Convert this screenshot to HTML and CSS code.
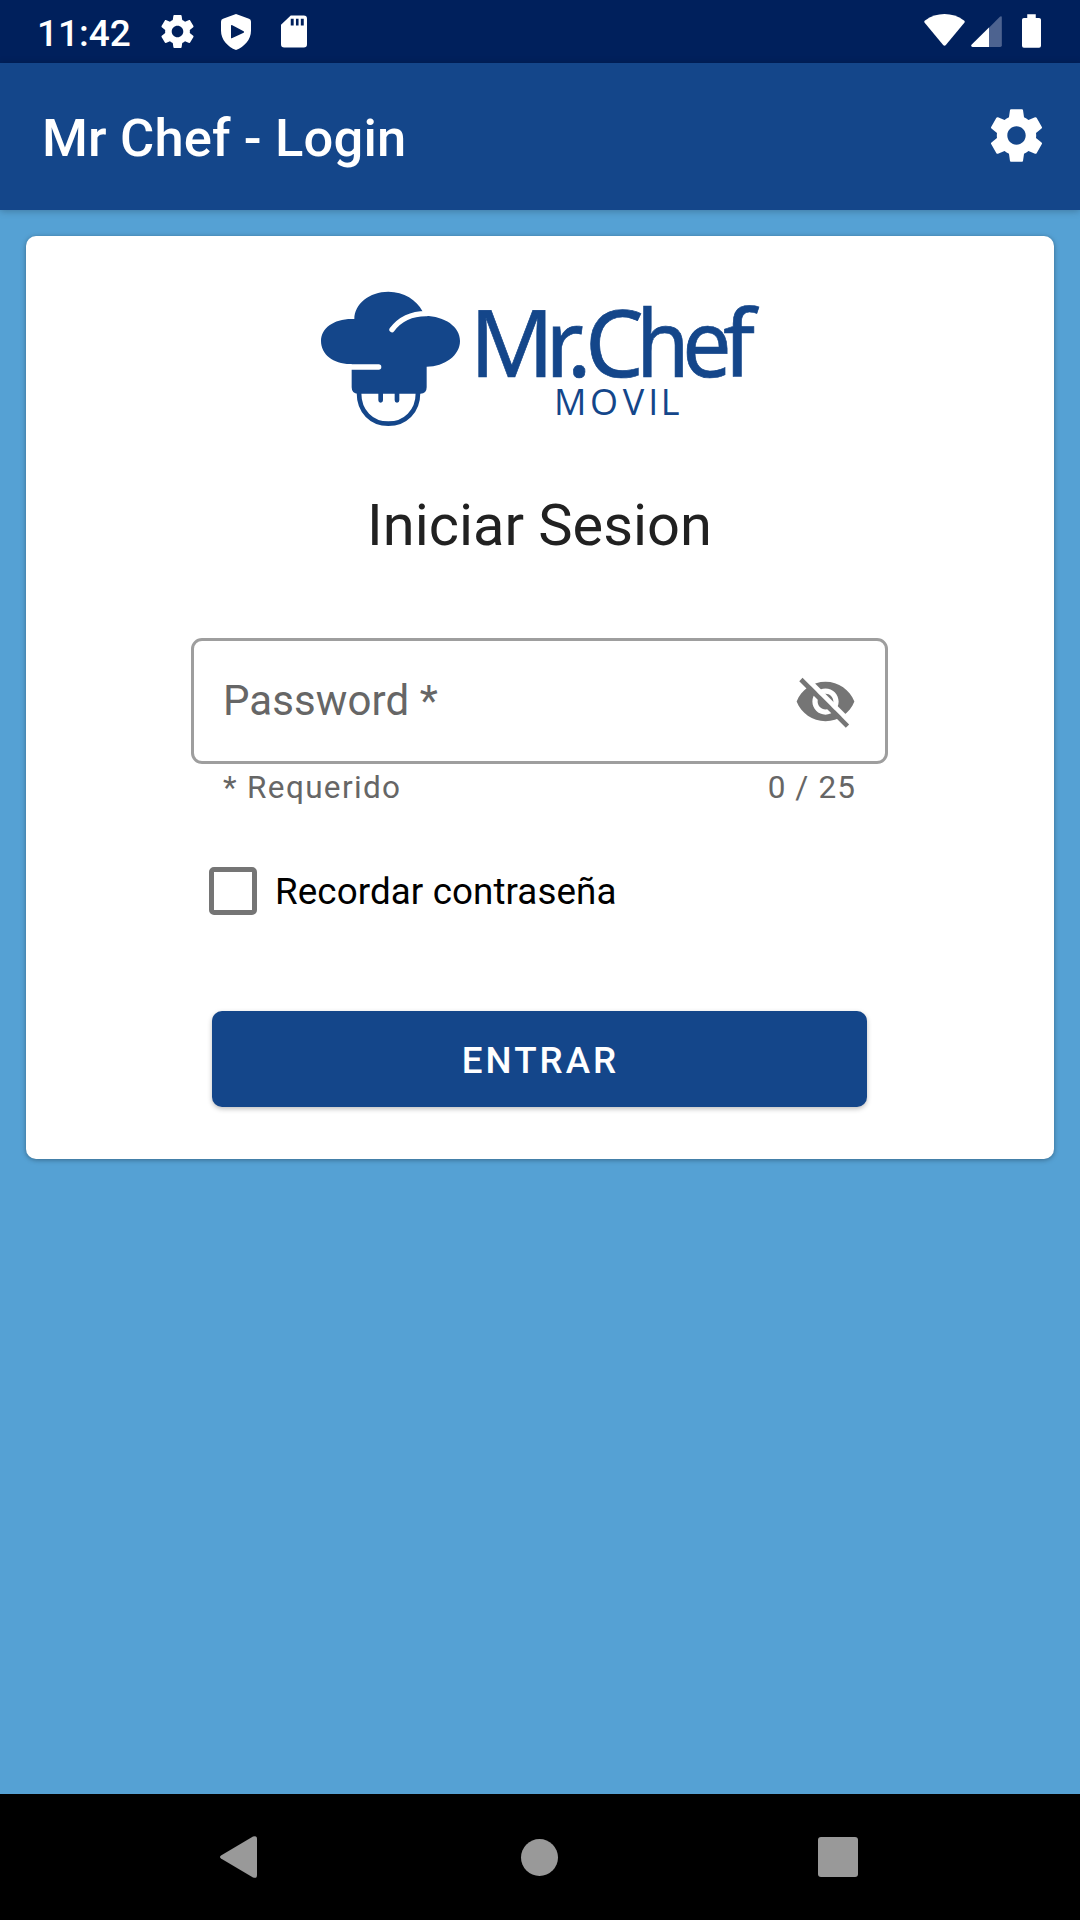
FILE: index.html
```html
<!DOCTYPE html>
<html lang="es">
<head>
    <meta charset="UTF-8">
    <meta name="viewport" content="width=device-width, initial-scale=1.0">
    <title>Mr Chef - Login</title>
    <link rel="stylesheet" href="styles.css">
</head>
<body>
    <div class="status-bar">
        <span class="clock">11:42</span>
        <svg class="status-gear" viewBox="2 2 20 20"><path fill="#fff" d="M19.43 12.98c.04-.32.07-.64.07-.98s-.03-.66-.07-.98l2.11-1.65c.19-.15.24-.42.12-.64l-2-3.46c-.12-.22-.39-.3-.61-.22l-2.49 1c-.52-.4-1.08-.73-1.69-.98l-.38-2.65C14.46 2.18 14.25 2 14 2h-4c-.25 0-.46.18-.49.42l-.38 2.65c-.61.25-1.17.59-1.69.98l-2.49-1c-.23-.09-.49 0-.61.22l-2 3.46c-.13.22-.07.49.12.64l2.11 1.65c-.04.32-.07.65-.07.98s.03.66.07.98l-2.11 1.65c-.19.15-.24.42-.12.64l2 3.46c.12.22.39.3.61.22l2.49-1c.52.4 1.08.73 1.69.98l.38 2.65c.03.24.24.42.49.42h4c.25 0 .46-.18.49-.42l.38-2.65c.61-.25 1.17-.59 1.69-.98l2.49 1c.23.09.49 0 .61-.22l2-3.46c.12-.22.07-.49-.12-.64l-2.11-1.65zM12 15.5c-1.93 0-3.5-1.57-3.5-3.5s1.57-3.5 3.5-3.5 3.5 1.57 3.5 3.5-1.57 3.5-3.5 3.5z"/></svg>
        <svg class="status-shield" viewBox="0 0 90 108"><path fill="#fff" fill-rule="evenodd" d="M45 0 84 14Q90 16 90 23V50C90 77 70 98 45 108C20 98 0 77 0 50V23Q0 16 6 14ZM30 36V71Q30 74 34 72L68 56Q71 54 68 52L34 34Q30 32 30 36Z"/></svg>
        <svg class="status-sd" viewBox="0 0 80 99"><path fill="#fff" fill-rule="evenodd" d="M30 0H70Q80 0 80 10V89Q80 99 70 99H10Q0 99 0 89V29ZM30 10V31H39V10ZM46 10V31H54V10ZM61 10V31H70V10Z"/></svg>
        <div class="status-right">
            <svg class="status-wifi" viewBox="0 0 122 95"><path fill="#fff" d="M3 19C38-6 84-6 119 19Q123 22 120 26L65 92Q61 96 57 92L2 26Q-1 22 3 19Z"/></svg>
            <svg class="status-signal" viewBox="0 0 93 94"><path fill="#4d6390" d="M54 94V36L87 2Q93-2 93 5V89Q93 94 88 94Z"/><path fill="#fff" d="M54 35V94H4Q-2 93 1 87Z"/></svg>
            <svg class="status-battery" viewBox="0 0 58 102"><path fill="#fff" d="M16 0H42V11H52Q58 11 58 17V96Q58 102 52 102H6Q0 102 0 96V17Q0 11 6 11H16Z"/></svg>
        </div>
    </div>

    <header class="app-bar">
        <h1>Mr Chef - Login</h1>
        <svg class="settings-icon" viewBox="0 0 24 24"><path fill="#fff" d="M19.43 12.98c.04-.32.07-.64.07-.98s-.03-.66-.07-.98l2.11-1.65c.19-.15.24-.42.12-.64l-2-3.46c-.12-.22-.39-.3-.61-.22l-2.49 1c-.52-.4-1.08-.73-1.69-.98l-.38-2.65C14.46 2.18 14.25 2 14 2h-4c-.25 0-.46.18-.49.42l-.38 2.65c-.61.25-1.17.59-1.69.98l-2.49-1c-.23-.09-.49 0-.61.22l-2 3.46c-.13.22-.07.49.12.64l2.11 1.65c-.04.32-.07.65-.07.98s.03.66.07.98l-2.11 1.65c-.19.15-.24.42-.12.64l2 3.46c.12.22.39.3.61.22l2.49-1c.52.4 1.08.73 1.69.98l.38 2.65c.03.24.24.42.49.42h4c.25 0 .46-.18.49-.42l.38-2.65c.61-.25 1.17-.59 1.69-.98l2.49 1c.23.09.49 0 .61-.22l2-3.46c.12-.22.07-.49-.12-.64l-2.11-1.65zM12 15.5c-1.93 0-3.5-1.57-3.5-3.5s1.57-3.5 3.5-3.5 3.5 1.57 3.5 3.5-1.57 3.5-3.5 3.5z"/></svg>
    </header>

    <main class="content">
        <form class="card">
            <svg class="logo" viewBox="0 0 1440 510">
                <!-- chef hat -->
                <path fill="#14468a" d="M163 147C163 102 208 65 265 65C312 65 350 90 367 123L375 138C434 138 480 170 480 213C480 256 434 290 380 290V352Q380 371 361 371H174Q155 371 155 352V282H150C100 282 63 253 63 213C63 173 104 144 163 147Z"/>
                <path class="slit" d="M276 179C300 147 335 131 378 131M146 291H236"/>
                <!-- face -->
                <path class="chin" d="M177 368C177 425 215 461 265 461C315 461 354 425 354 368M242 368V391M291 368V391"/>
                <text class="logo-name" y="320"><tspan x="509 736 800 855">Mr.C</tspan><tspan x="1009" textLength="160" lengthAdjust="spacingAndGlyphs">h</tspan><tspan x="1147" textLength="148" lengthAdjust="spacingAndGlyphs">e</tspan><tspan x="1269">f</tspan></text>
                <text class="logo-sub" y="434" x="762 870 968 1045 1082">MOVIL</text>
            </svg>

            <h2>Iniciar Sesion</h2>

            <div class="field">
                <span>Password *</span>
                <svg class="eye-icon" viewBox="0 0 24 24">
                    <path fill="#757575" d="M12 4.5C7 4.5 2.73 7.61 1 12c1.73 4.39 6 7.5 11 7.5s9.27-3.11 11-7.5c-1.73-4.39-6-7.5-11-7.5zM12 17c-2.76 0-5-2.24-5-5s2.24-5 5-5 5 2.24 5 5-2.24 5-5 5zM12 9c-1.66 0-3 1.34-3 3s1.34 3 3 3 3-1.34 3-3-1.34-3-3-3z"/>
                    <path stroke="#fff" stroke-width="1.9" d="M4.3 2.74 22 20.44"/>
                    <path stroke="#757575" stroke-width="1.8" stroke-linecap="square" d="M3.27 4.27 19.74 20.74"/>
                </svg>
            </div>
            <div class="helper">
                <span>* Requerido</span>
                <span class="counter">0 / 25</span>
            </div>

            <label class="remember">
                <span class="checkbox"></span>
                <span class="remember-text">Recordar contraseña</span>
            </label>

            <button class="submit" type="button">ENTRAR</button>
        </form>
    </main>

    <nav class="nav-bar">
        <svg class="nav-back" viewBox="0 0 37 42"><path fill="#999" d="M1 19.5 33 .6Q37-1 37 3V39Q37 43 33 41.4L1 22.5Q-1 21 1 19.5Z"/></svg>
        <span class="nav-home"></span>
        <span class="nav-recent"></span>
    </nav>
</body>
</html>
```
FILE: styles.css
```css
:root {
    --primary: #14468a;
    --primary-dark: #00205c;
    --background: #55a1d4;
    --hint: #666;
}

* {
    box-sizing: border-box;
    margin: 0;
    padding: 0;
}

body {
    font-family: Roboto, sans-serif;
    background-color: var(--background);
    width: 1080px;
    height: 1920px;
    display: flex;
    flex-direction: column;
    overflow: hidden;
}

svg {
    display: block;
    flex-shrink: 0;
}

/* Status bar */
.status-bar {
    height: 63px;
    background: var(--primary-dark);
    display: flex;
    align-items: center;
    padding: 0 39px 0 37px;
}

.clock {
    color: #fff;
    font-size: 37px;
    font-weight: 500;
    line-height: 44px;
    width: 124px;
    padding-top: 4px;
}

.status-gear {
    width: 33px;
    height: 33px;
    margin-right: 27px;
}

.status-shield {
    width: 30px;
    height: 36px;
    margin-right: 30px;
}

.status-sd {
    width: 26px;
    height: 33px;
}

.status-right {
    display: flex;
    align-items: center;
    margin-left: auto;
}

.status-wifi {
    width: 41px;
    height: 32px;
    margin-right: 6px;
    margin-bottom: 3px;
}

.status-signal {
    width: 31px;
    height: 31px;
    margin-right: 20px;
}

.status-battery {
    width: 19px;
    height: 34px;
    margin-bottom: 1px;
}

/* App bar */
.app-bar {
    height: 147px;
    background: var(--primary);
    box-shadow: 0 1px 7px rgba(0, 0, 0, 0.25);
    display: flex;
    align-items: center;
    justify-content: space-between;
    padding: 0 32px 0 42px;
}

.app-bar h1 {
    color: #fff;
    font-size: 52.5px;
    font-weight: 500;
    line-height: 62px;
    letter-spacing: 0.15px;
    padding-top: 3px;
}

.settings-icon {
    width: 63px;
    height: 63px;
    margin-bottom: 2px;
}

/* Login card */
.content {
    flex: 1;
    padding: 26px;
}

.card {
    height: 923px;
    background: #fff;
    border-radius: 10px;
    box-shadow: 0 1px 5px rgba(0, 0, 0, 0.35);
    padding: 34px 166px 0 165px;
}

.logo {
    width: 480px;
    height: 170px;
    margin-left: 109px;
}

.slit {
    fill: none;
    stroke: #fff;
    stroke-width: 16;
    stroke-linecap: round;
}

.chin {
    fill: none;
    stroke: var(--primary);
    stroke-width: 14;
    stroke-linecap: round;
}

.logo-name {
    fill: var(--primary);
    stroke: var(--primary);
    stroke-width: 2;
    font-family: 'Noto Sans', sans-serif;
    font-size: 279px;
}

.logo-sub {
    fill: var(--primary);
    font-family: 'Open Sans', sans-serif;
    font-size: 108px;
}

.card h2 {
    color: #212121;
    font-size: 57.75px;
    font-weight: 400;
    line-height: 68px;
    text-align: center;
    margin-top: 51px;
}

.field {
    height: 126px;
    margin-top: 79px;
    border: 3px solid #9e9e9e;
    border-radius: 11px;
    display: flex;
    align-items: center;
    justify-content: space-between;
    padding: 0 28px 0 29px;
    color: var(--hint);
    font-size: 42px;
    letter-spacing: 0.1px;
}

.field span {
    padding-bottom: 1px;
}

.eye-icon {
    width: 63px;
    height: 63px;
}

.helper {
    display: flex;
    justify-content: space-between;
    padding: 5px 32px 0 32px;
    color: var(--hint);
    font-size: 31.5px;
    line-height: 37px;
    letter-spacing: 1.35px;
}

.counter {
    letter-spacing: 1.1px;
}

.remember {
    display: flex;
    align-items: center;
    gap: 18px;
    margin-top: 61px;
    padding-left: 18px;
    color: #000;
    font-size: 36.75px;
    line-height: 46px;
    letter-spacing: 0.1px;
}

.remember-text {
    padding-top: 2px;
}

.checkbox {
    width: 48px;
    height: 48px;
    border: 5.5px solid #757575;
    border-radius: 5px;
}

.submit {
    display: block;
    width: 655px;
    height: 96px;
    margin: 96px 0 0 21px;
    padding: 2px 0 0 2px;
    border: none;
    border-radius: 10px;
    background: var(--primary);
    box-shadow: 0 2px 5px rgba(0, 0, 0, 0.25);
    color: #fff;
    font-family: inherit;
    font-size: 36.75px;
    font-weight: 500;
    letter-spacing: 3px;
}

/* Navigation bar */
.nav-bar {
    height: 126px;
    background: #000;
    display: flex;
    align-items: center;
    justify-content: space-between;
    padding: 0 222px 0 220px;
}

.nav-back {
    width: 37px;
    height: 42px;
}

.nav-home {
    width: 37px;
    height: 37px;
    margin-left: 3px;
    border-radius: 50%;
    background: #999;
}

.nav-recent {
    width: 40px;
    height: 40px;
    border-radius: 3px;
    background: #999;
}
```
